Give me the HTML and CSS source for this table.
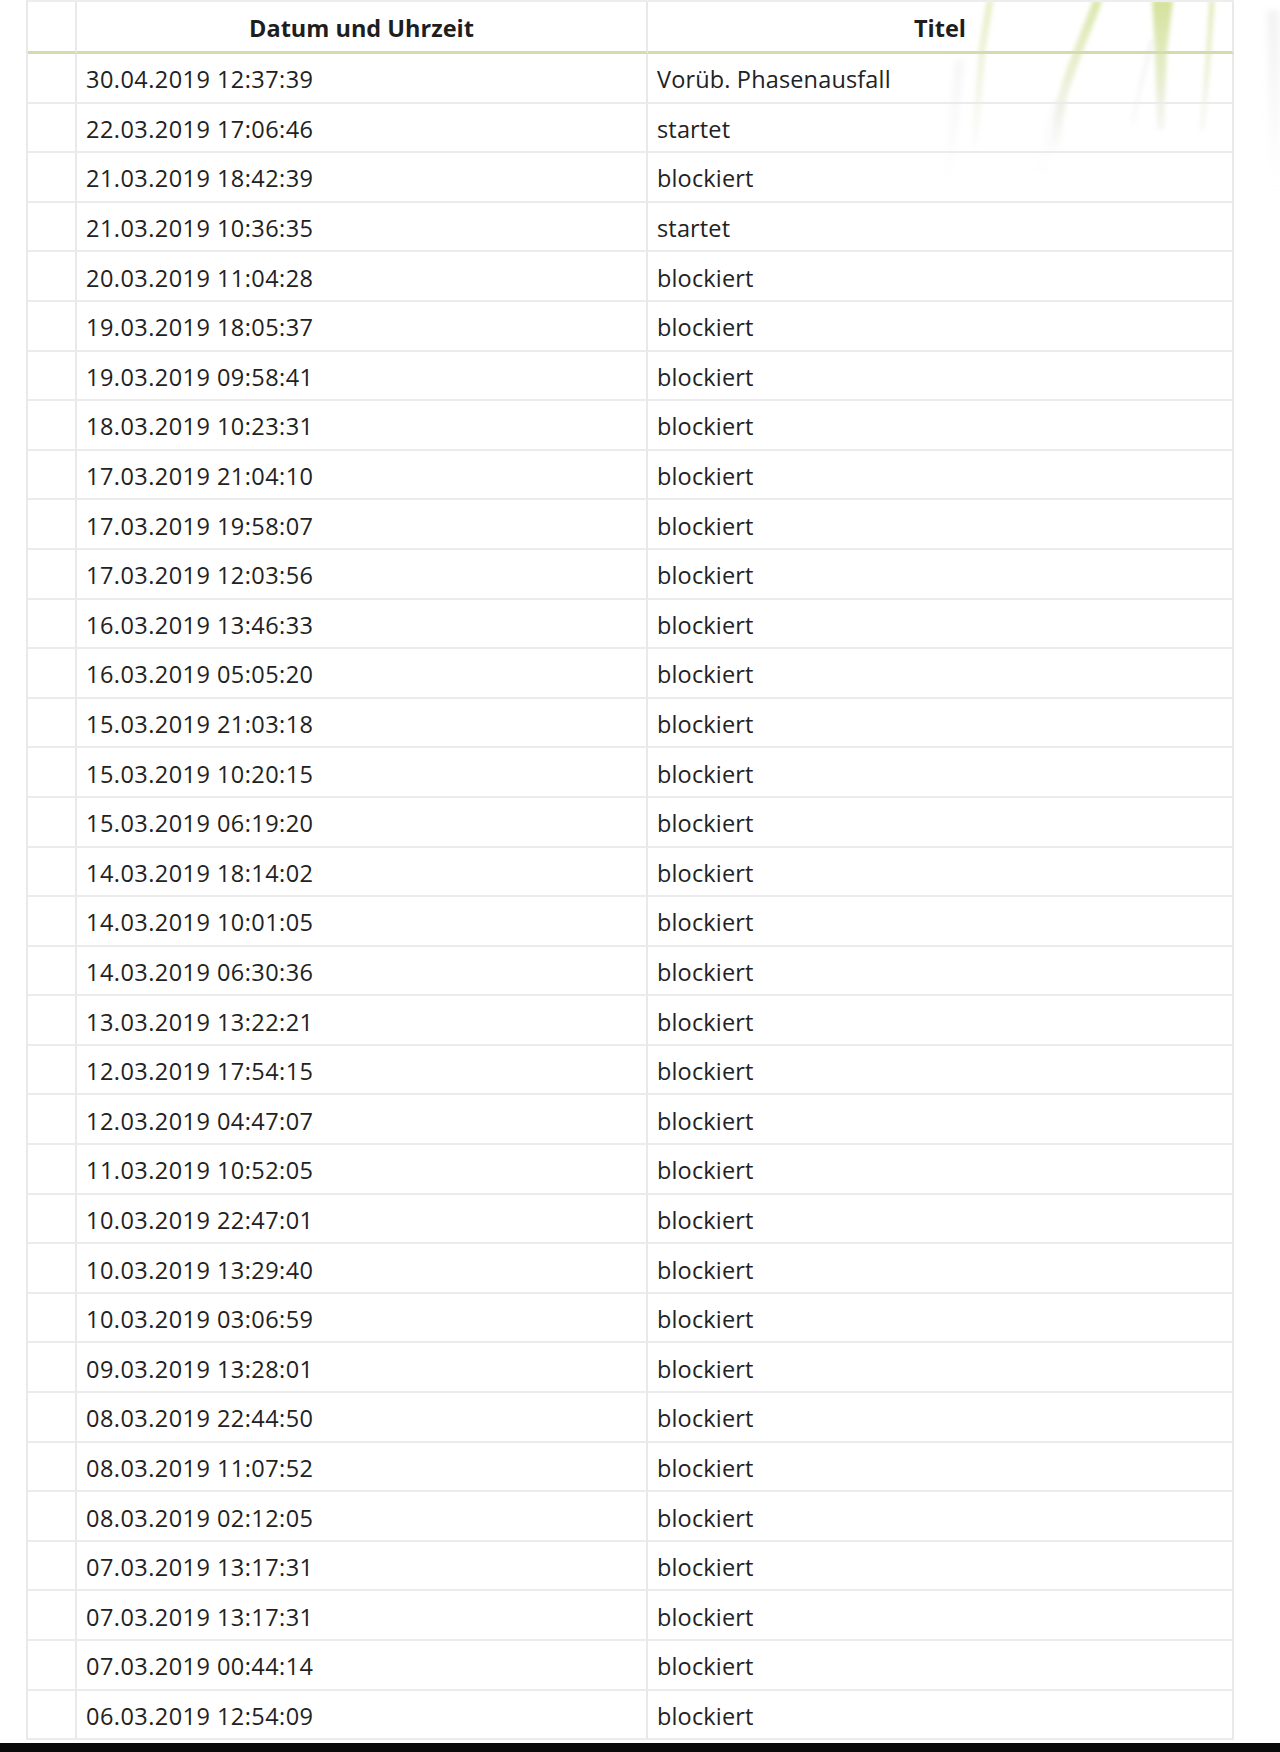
FILE: index.html
```html
<!DOCTYPE html>
<html lang="de">
<head>
<meta charset="utf-8">
<title>Ereignisse</title>
<link rel="stylesheet" href="styles.css">
</head>
<body>
<div class="page">
  <svg class="grass" width="340" height="200" viewBox="0 0 340 200" aria-hidden="true">
    <defs>
      <linearGradient id="gGreen" gradientUnits="userSpaceOnUse" x1="0" y1="0" x2="0" y2="160">
        <stop offset="0" stop-color="#c6d97c" stop-opacity="0.85"/>
        <stop offset="0.45" stop-color="#cfdc98" stop-opacity="0.6"/>
        <stop offset="1" stop-color="#d0d0d0" stop-opacity="0"/>
      </linearGradient>
      <linearGradient id="gGray" gradientUnits="userSpaceOnUse" x1="0" y1="0" x2="0" y2="190">
        <stop offset="0" stop-color="#d8d8d8" stop-opacity="0.35"/>
        <stop offset="1" stop-color="#d8d8d8" stop-opacity="0"/>
      </linearGradient>
      <filter id="soft" x="-20%" y="-20%" width="140%" height="140%">
        <feGaussianBlur stdDeviation="2"/>
      </filter>
      <filter id="softer" x="-50%" y="-20%" width="200%" height="140%">
        <feGaussianBlur stdDeviation="3"/>
      </filter>
    </defs>
    <g filter="url(#softer)">
      <path d="M20,60 C16,100 12,140 8,180" stroke="url(#gGray)" stroke-width="10" fill="none"/>
      <path d="M120,100 C112,130 106,150 100,175" stroke="url(#gGray)" stroke-width="12" fill="none"/>
      <path d="M333,10 C334,70 335,130 336,190" stroke="url(#gGray)" stroke-width="12" fill="none"/>
    </g>
    <g filter="url(#soft)">
      <path d="M50,0 C48,15 45,30 42,50 C40,80 37,115 34,150" stroke="url(#gGreen)" stroke-width="7" fill="none" opacity="0.5"/>
      <path d="M158,0 C149,25 133,60 123,95 C119,115 117,135 115,155" stroke="url(#gGreen)" stroke-width="9" fill="none" opacity="0.75"/>
      <path d="M212,0 L233,0 L227,50 L224,130 L217,130 L215,50 Z" fill="url(#gGreen)" opacity="0.9"/>
      <path d="M212,40 C205,70 198,95 192,125" stroke="url(#gGray)" stroke-width="5" fill="none"/>
      <path d="M272,0 C270,40 266,85 262,130" stroke="url(#gGreen)" stroke-width="5" fill="none" opacity="0.65"/>
    </g>
  </svg>

  <table class="log">
    <thead>
      <tr>
        <th class="c-sel"></th>
        <th class="c-date">Datum und Uhrzeit</th>
        <th class="c-title">Titel</th>
      </tr>
    </thead>
    <tbody>
      <tr><td class="c-sel"></td><td class="d">30.04.2019 12:37:39</td><td class="t">Vorüb. Phasenausfall</td></tr>
      <tr><td class="c-sel"></td><td class="d">22.03.2019 17:06:46</td><td class="t">startet</td></tr>
      <tr><td class="c-sel"></td><td class="d">21.03.2019 18:42:39</td><td class="t">blockiert</td></tr>
      <tr><td class="c-sel"></td><td class="d">21.03.2019 10:36:35</td><td class="t">startet</td></tr>
      <tr><td class="c-sel"></td><td class="d">20.03.2019 11:04:28</td><td class="t">blockiert</td></tr>
      <tr><td class="c-sel"></td><td class="d">19.03.2019 18:05:37</td><td class="t">blockiert</td></tr>
      <tr><td class="c-sel"></td><td class="d">19.03.2019 09:58:41</td><td class="t">blockiert</td></tr>
      <tr><td class="c-sel"></td><td class="d">18.03.2019 10:23:31</td><td class="t">blockiert</td></tr>
      <tr><td class="c-sel"></td><td class="d">17.03.2019 21:04:10</td><td class="t">blockiert</td></tr>
      <tr><td class="c-sel"></td><td class="d">17.03.2019 19:58:07</td><td class="t">blockiert</td></tr>
      <tr><td class="c-sel"></td><td class="d">17.03.2019 12:03:56</td><td class="t">blockiert</td></tr>
      <tr><td class="c-sel"></td><td class="d">16.03.2019 13:46:33</td><td class="t">blockiert</td></tr>
      <tr><td class="c-sel"></td><td class="d">16.03.2019 05:05:20</td><td class="t">blockiert</td></tr>
      <tr><td class="c-sel"></td><td class="d">15.03.2019 21:03:18</td><td class="t">blockiert</td></tr>
      <tr><td class="c-sel"></td><td class="d">15.03.2019 10:20:15</td><td class="t">blockiert</td></tr>
      <tr><td class="c-sel"></td><td class="d">15.03.2019 06:19:20</td><td class="t">blockiert</td></tr>
      <tr><td class="c-sel"></td><td class="d">14.03.2019 18:14:02</td><td class="t">blockiert</td></tr>
      <tr><td class="c-sel"></td><td class="d">14.03.2019 10:01:05</td><td class="t">blockiert</td></tr>
      <tr><td class="c-sel"></td><td class="d">14.03.2019 06:30:36</td><td class="t">blockiert</td></tr>
      <tr><td class="c-sel"></td><td class="d">13.03.2019 13:22:21</td><td class="t">blockiert</td></tr>
      <tr><td class="c-sel"></td><td class="d">12.03.2019 17:54:15</td><td class="t">blockiert</td></tr>
      <tr><td class="c-sel"></td><td class="d">12.03.2019 04:47:07</td><td class="t">blockiert</td></tr>
      <tr><td class="c-sel"></td><td class="d">11.03.2019 10:52:05</td><td class="t">blockiert</td></tr>
      <tr><td class="c-sel"></td><td class="d">10.03.2019 22:47:01</td><td class="t">blockiert</td></tr>
      <tr><td class="c-sel"></td><td class="d">10.03.2019 13:29:40</td><td class="t">blockiert</td></tr>
      <tr><td class="c-sel"></td><td class="d">10.03.2019 03:06:59</td><td class="t">blockiert</td></tr>
      <tr><td class="c-sel"></td><td class="d">09.03.2019 13:28:01</td><td class="t">blockiert</td></tr>
      <tr><td class="c-sel"></td><td class="d">08.03.2019 22:44:50</td><td class="t">blockiert</td></tr>
      <tr><td class="c-sel"></td><td class="d">08.03.2019 11:07:52</td><td class="t">blockiert</td></tr>
      <tr><td class="c-sel"></td><td class="d">08.03.2019 02:12:05</td><td class="t">blockiert</td></tr>
      <tr><td class="c-sel"></td><td class="d">07.03.2019 13:17:31</td><td class="t">blockiert</td></tr>
      <tr><td class="c-sel"></td><td class="d">07.03.2019 13:17:31</td><td class="t">blockiert</td></tr>
      <tr><td class="c-sel"></td><td class="d">07.03.2019 00:44:14</td><td class="t">blockiert</td></tr>
      <tr><td class="c-sel"></td><td class="d">06.03.2019 12:54:09</td><td class="t">blockiert</td></tr>
    </tbody>
  </table>
</div>
<div class="bottom-bar"></div>
</body>
</html>
```

FILE: styles.css
```css
html, body {
  margin: 0;
  padding: 0;
  background: #ffffff;
}

body {
  font-family: "Open Sans", "DejaVu Sans", sans-serif;
  color: #222222;
  font-size: 23.5px;
}

.page {
  position: relative;
  padding-left: 26px;
  height: 1752px;
  overflow: hidden;
}

.grass {
  position: absolute;
  top: 0;
  left: 940px;
  z-index: 0;
  pointer-events: none;
}

.log {
  position: relative;
  z-index: 1;
  border-collapse: separate;
  border-spacing: 0;
  table-layout: fixed;
  width: 1208px;
  border-left: 2px solid #e9e9e9;
  border-top: 2px solid #ededed;
  background: transparent;
}

.log th,
.log td {
  box-sizing: border-box;
  border-right: 2px solid #e9e9e9;
  padding: 0 9px;
  text-align: left;
  vertical-align: middle;
  white-space: nowrap;
}

.log th {
  height: 52px;
  border-bottom: 3px solid #d4dcae;
  font-weight: 700;
  text-align: center;
  color: #1e1e1e;
  padding-top: 2px;
}

.log td {
  height: 49.6px;
  border-bottom: 2px solid #ebebeb;
  padding-top: 3px;
  font-weight: 400;
}

.log td.d {
  letter-spacing: 0.45px;
}

.log td.t {
  letter-spacing: 0.15px;
}

.log .c-sel {
  width: 49px;
}

.log .c-date {
  width: 571px;
}

.log .c-title {
  width: 586px;
}

.bottom-bar {
  position: fixed;
  left: 0;
  right: 0;
  bottom: 0;
  height: 9px;
  background: #0a0a0a;
  z-index: 5;
}
```
